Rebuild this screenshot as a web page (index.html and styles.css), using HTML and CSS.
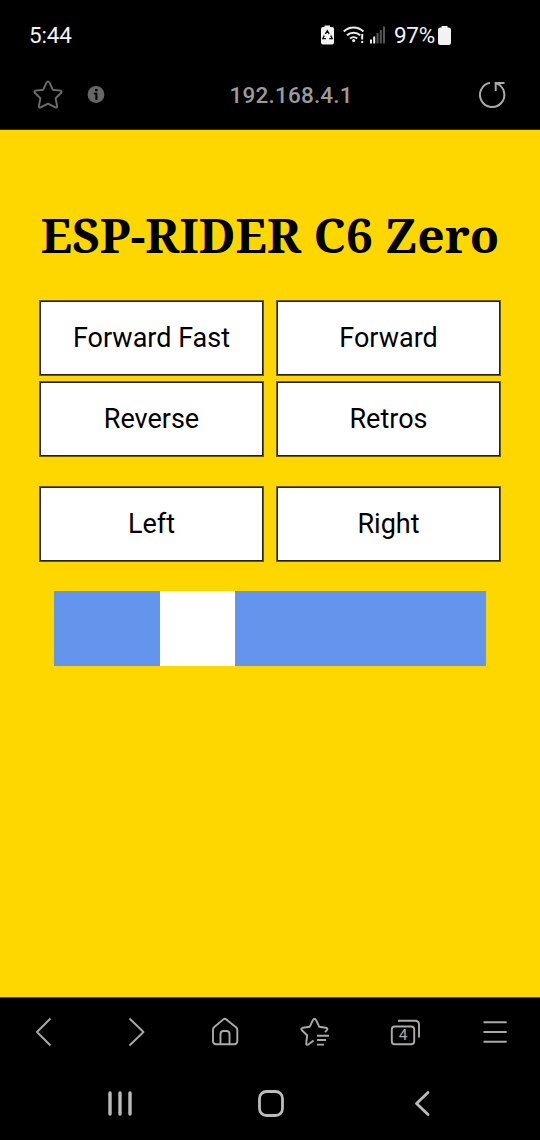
FILE: index.html
```html
<!DOCTYPE html>
<html lang="en">
<head>
<meta charset="utf-8">
<title>ESP-RIDER C6 Zero</title>
<link rel="stylesheet" href="styles.css">
</head>
<body>
<header class="top">
  <div class="status">
    <span class="clock">5:44</span>
    <svg class="icons" width="66" height="24" viewBox="320 24 66 24">
      <path d="M324.500 26.500h5.500v1.500h2q2 0 2 2V43.500q0 2-2 2h-9q-2 0-2-2V30q0-2 2-2h1.500z" fill="#f2f2f2"/>
      <path d="M325.300 35l2-3.200 2 3.200M330.700 36.500l1.500 3.200h-3M326 39.700h-3.200l1.500-3.200" fill="none" stroke="#000" stroke-width="1.300"/>
      <g fill="none" stroke="#eee" stroke-width="2">
        <path d="M343.800 32.500a14 14 0 0 1 19.600 0M347 36.300a9.500 9.500 0 0 1 13.200 0M350 39.500a5.500 5.500 0 0 1 7.200 0"/>
        <path d="M362.200 35v5.500M362.200 42v2"/>
      </g>
      <circle cx="353.600" cy="41.500" r="1.500" fill="#eee"/>
      <path d="M370 40.500h2v4h-2zM373.200 37.500h2v7h-2z" fill="#eee"/>
      <path d="M376.500 34h2v10.500h-2zM379.800 31h2v13.500h-2zM383 27.500h2v17h-2z" fill="#555"/>
    </svg>
    <span class="percent">97%</span>
    <svg class="battery" width="13" height="20" viewBox="438 25 13 20"><path d="M441.500 26h6v1.500h1q2.500 0 2.500 2.500v12.500q0 2.500-2.500 2.500h-8q-2.500 0-2.500-2.500V30q0-2.500 2.500-2.500h1z" fill="#f2f2f2"/></svg>
  </div>
  <div class="address">
    <svg class="star" width="30" height="30" viewBox="33 80 30 30"><path d="M46.600 82.500q1.400-2.200 2.800 0l3.400 7.200 7.600.9q2 .6.800 2.200l-5.600 5.500 1.500 7.700q.1 2.200-1.800 1.400L48 103.600l-7.300 3.800q-1.900.8-1.800-1.400l1.500-7.700-5.600-5.500q-1.200-1.600.8-2.200l7.600-.9z" fill="none" stroke="#6c6c6c" stroke-width="1.900" stroke-linejoin="round"/></svg>
    <svg class="info" width="18" height="18" viewBox="87 86 18 18"><circle cx="96" cy="94.500" r="8.400" fill="#666"/><path d="M95 89h2.500v2.200H95zM93.800 92.700h3.600v7.300h-2v-5.500h-1.600z" fill="#000"/></svg>
    <span class="url">192.168.4.1</span>
    <svg class="reload" width="30" height="30" viewBox="477 80 30 30"><g fill="none" stroke="#aaa" stroke-width="2"><path d="M490 82.800a12.200 12.200 0 1 0 7 .8M504.500 83h-8.800v8"/></g></svg>
  </div>
</header>
<main class="page">
  <h1 class="title"><span class="title-text">ESP-RIDER C6 Zero</span></h1>
  <div class="pad">
    <button class="key">Forward Fast</button><button class="key">Forward</button>
    <button class="key">Reverse</button><button class="key">Retros</button>
  </div>
  <div class="pad steer">
    <button class="key">Left</button><button class="key">Right</button>
  </div>
  <div class="slider"><div class="thumb"></div></div>
</main>
<footer class="bottom">
  <div class="tabs">
    <svg viewBox="0 1012 90 40"><path d="M50.500 1018.500L37 1032l13.500 13.500"/></svg>
    <svg viewBox="90 1012 90 40"><path d="M129.500 1018.500L143.500 1032l-14 13.500"/></svg>
    <svg viewBox="180 1012 90 40"><path d="M213 1030q0-1.800 1.300-2.900l9-7.700q1.500-1.200 3 0l9.700 7.900q1.300 1.100 1.300 2.700v11q0 3.200-3.200 3.200H216.200q-3.200 0-3.200-3.200zM220.500 1044v-10q0-3 3-3h3q3 0 3 3v10"/></svg>
    <svg viewBox="270 1012 90 40"><path d="M313.500 1040.500l-4.500 3.500q-3.300 2-2.800-1l1-7.500-5-5q-2-2 .5-2.700l7-1 3.300-6.900q1.500-2.300 3 0l3.300 6.900 6.500 1q2.500.5 1.200 2.200l-1.900 2.200M317 1035.800h12M317 1040h9M317 1044.600h7"/></svg>
    <svg viewBox="360 1012 90 40"><rect x="391.800" y="1026.500" width="22.400" height="17.700" rx="3"/><path d="M398 1020.800h17q4 0 4 4v12.700"/><text x="403" y="1040.300" text-anchor="middle">4</text></svg>
    <svg viewBox="450 1012 90 40"><path d="M483.500 1022.300h23.200M483.500 1032h23.200M483.500 1041.800h23.200"/></svg>
  </div>
  <div class="nav">
    <svg viewBox="45 1084 150 40"><path class="recents" d="M110 1093v21M120 1093v21M130 1093v21"/></svg>
    <svg viewBox="196 1084 150 40"><rect x="259.500" y="1091.500" width="23" height="24" rx="7"/></svg>
    <svg viewBox="347 1084 150 40"><path d="M428 1092.500l-11.500 11L428 1114.500"/></svg>
  </div>
</footer>
</body>
</html>
```
FILE: styles.css
```css
* { box-sizing: border-box; }
body {
  margin: 0;
  width: 540px;
  height: 1140px;
  display: flex;
  flex-direction: column;
  background: #000;
  font-family: Roboto, sans-serif;
}
svg { display: block; flex: none; }
.top { height: 130px; border-bottom: 1px solid #3a3200; }
.status {
  display: flex;
  align-items: center;
  height: 60px;
  padding: 10px 0 0 29px;
  color: #f2f2f2;
  font-size: 22.5px;
}
.clock { width: 291px; letter-spacing: -0.2px; }
.percent { width: 44px; margin-left: 8px; letter-spacing: -0.3px; }
.address { display: flex; align-items: center; height: 70px; padding-left: 33px; }
.info { margin-left: 24px; }
.url { width: 372px; padding-left: 124.5px; color: #9b9b9b; font-size: 22.5px; font-weight: 500; letter-spacing: 0.2px; }
.page { height: 867px; background: #ffd700; }
.title {
  margin: 0;
  height: 170px;
  padding-top: 71px;
  display: flex;
  justify-content: center;
  white-space: nowrap;
  font: bold 48px/68px "Noto Serif", "Liberation Serif", serif;
}
.pad { display: grid; grid-template-columns: 225px 225px; gap: 5px 12px; padding-left: 39px; }
.steer { margin-top: 29px; }
.key {
  height: 76px;
  border: 1px solid #6a5b0c;
  box-shadow: inset 0 0 0 1px #222;
  border-radius: 0;
  padding: 0;
  background: #fff;
  color: #000;
  font: 27px Roboto, sans-serif;
}
.slider { width: 432px; height: 75px; margin: 29px 0 0 54px; padding-left: 106px; background: #6495ed; }
.thumb { width: 75px; height: 75px; background: #fff; }
.bottom { height: 143px; border-top: 1px solid #5b4e00; }
.tabs { display: flex; padding-top: 14px; }
.tabs svg { width: 90px; height: 40px; fill: none; stroke: #aaa; stroke-width: 1.9; stroke-linejoin: round; }
.tabs text { fill: #aaa; stroke: none; font: 15.5px Roboto, sans-serif; }
.nav { display: flex; gap: 1px; padding: 32px 0 0 45px; }
.nav svg { width: 150px; height: 40px; fill: none; stroke: #bbb; stroke-width: 2.8; stroke-linecap: round; stroke-linejoin: round; }
.nav .recents { stroke-width: 3.4; }
```
